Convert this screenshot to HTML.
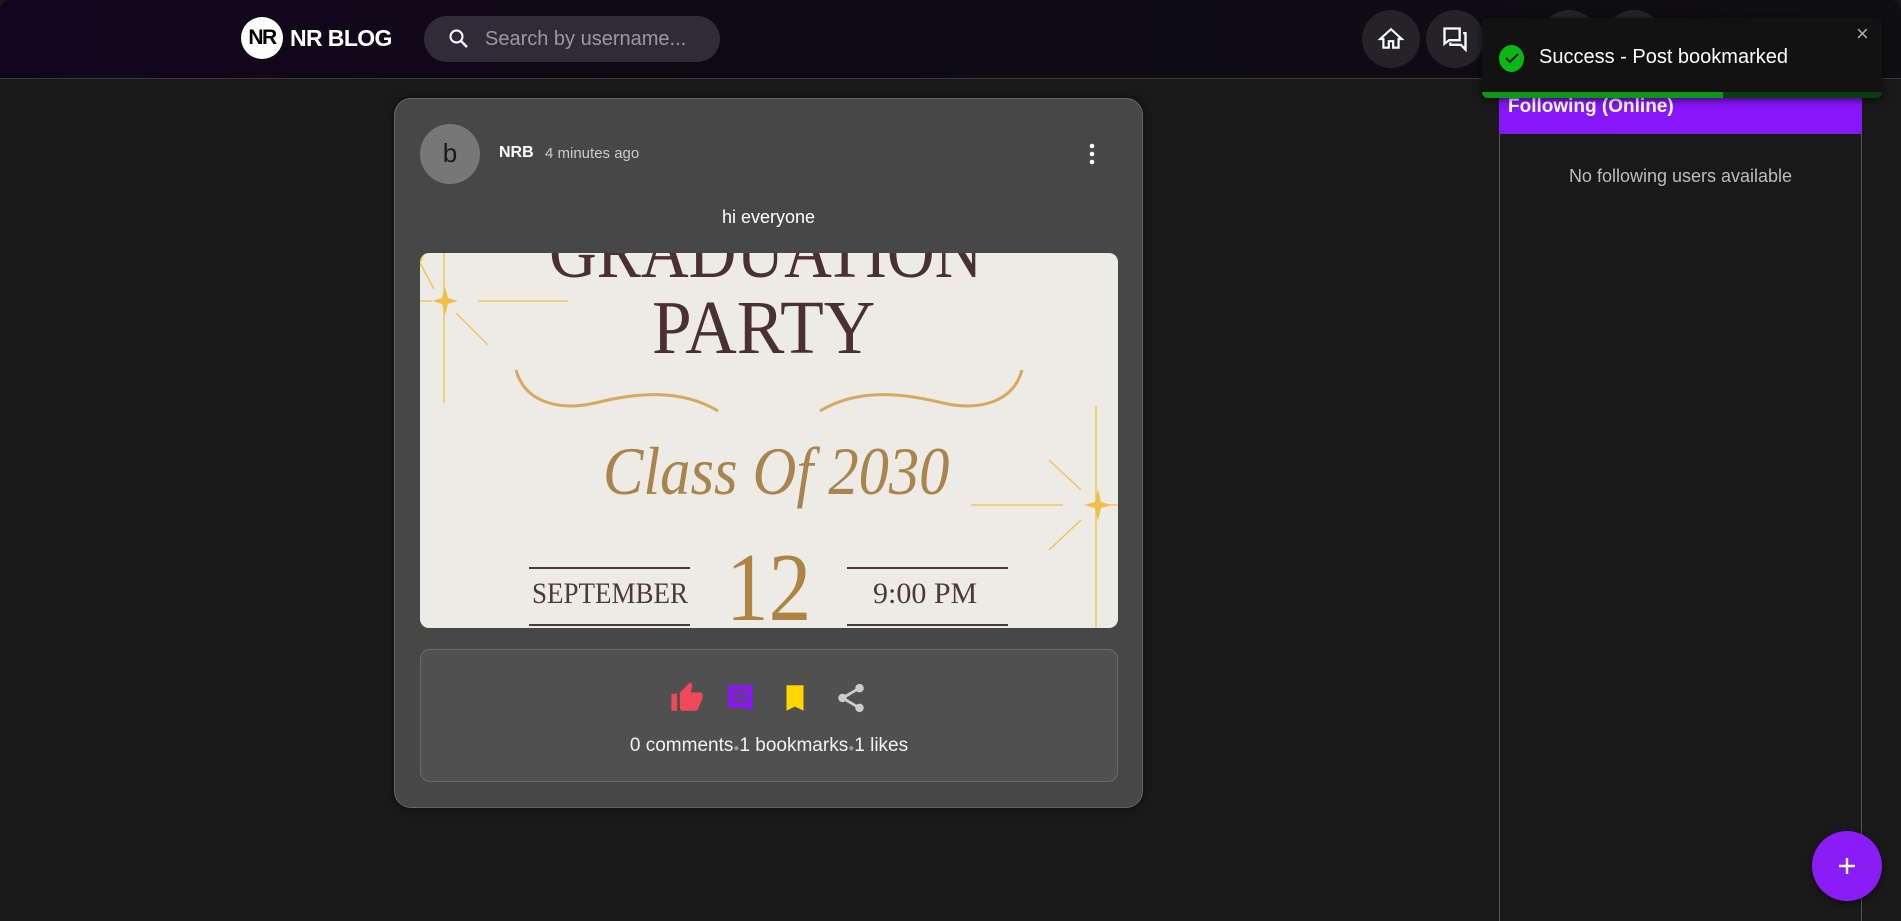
<!DOCTYPE html>
<html><head><meta charset="utf-8"><style>
*{box-sizing:border-box;margin:0;padding:0}
body{width:1901px;height:921px;overflow:hidden;background:#191919;font-family:"Liberation Sans",sans-serif;position:relative;color:#fff}
.hdr{position:absolute;left:0;top:0;width:1901px;height:79px;background:linear-gradient(90deg,#14051f,#0d0a13 40%,#0f0e12);border-bottom:1px solid #3a3a3a;border-radius:10px 10px 0 0}
.abs{position:absolute}
.circ{border-radius:50%}
.ib{position:absolute;top:10px;width:58px;height:58px;border-radius:50%;background:#252328;display:flex;align-items:center;justify-content:center}
.card{left:394px;top:98px;width:749px;height:710px;background:#474747;border:1px solid #666;border-radius:17px;box-shadow:0 0 8px rgba(0,0,0,.5)}
.img{left:420px;top:253px;width:698px;height:375px;background:#ecebe6;border-radius:9px;overflow:hidden}
.serif{font-family:"Liberation Serif",serif;position:absolute;white-space:nowrap;line-height:1}
.ln{position:absolute;height:2px;background:#4a3a3a}
</style></head><body>
<div class="hdr"></div>
<div class="abs circ" style="left:241px;top:17px;width:42px;height:42px;background:#fff;color:#000;font-weight:bold;font-size:21px;line-height:42px;text-align:center;letter-spacing:-1.5px">NR</div>
<div class="abs" style="left:290px;top:25px;font-weight:bold;font-size:23px;letter-spacing:-0.6px">NR BLOG</div>
<div class="abs" style="left:424px;top:16px;width:296px;height:46px;border-radius:23px;background:#302b39"></div>
<svg class="abs" style="left:447px;top:27px" width="24" height="24" viewBox="0 0 24 24"><circle cx="9.5" cy="9.5" r="6" fill="none" stroke="#fff" stroke-width="2"/><path d="M14 14l6 6" stroke="#fff" stroke-width="2.4"/></svg>
<div class="abs" style="left:485px;top:28px;font-size:20px;color:#9b97a2">Search by username...</div>
<div class="ib" style="left:1362px"><svg width="26" height="26" viewBox="0 0 24 24"><path d="M12 3L2 12h3v8h5v-6h4v6h5v-8h3z" fill="none" stroke="#fff" stroke-width="2"/></svg></div>
<div class="ib" style="left:1426px"><svg width="28" height="28" viewBox="0 0 24 24"><path d="M3 3h13v10H7l-4 3z" fill="none" stroke="#fff" stroke-width="2"/><path d="M19 7h2v14l-4-4H8v-2" fill="none" stroke="#fff" stroke-width="2"/></svg></div>
<div class="ib" style="left:1540px"></div><div class="ib" style="left:1605px"></div>

<div class="abs" style="left:1499px;top:79px;width:363px;height:842px;background:#191919;border-left:1px solid #555;border-right:1px solid #555"></div>
<div class="abs" style="left:1499px;top:88px;width:363px;height:46px;background:#8716f8"></div>
<div class="abs" style="left:1508px;top:96px;font-weight:bold;font-size:19px">Following (Online)</div>
<div class="abs" style="left:1499px;top:166px;width:363px;text-align:center;font-size:18px;color:#bdbdbd">No following users available</div>

<div class="abs" style="left:1482px;top:18px;width:400px;height:80px;background:#121212;border-radius:6px;overflow:hidden;box-shadow:0 2px 8px rgba(0,0,0,.6)">
<div class="abs" style="left:0;bottom:0;width:400px;height:6px;background:#0b3d10"></div>
<div class="abs" style="left:0;bottom:0;width:241px;height:6px;background:#0a9816"></div>
</div>
<div class="abs circ" style="left:1499px;top:45px;width:25px;height:27px;background:#0ab814"></div>
<svg class="abs" style="left:1503px;top:49px" width="18" height="18" viewBox="0 0 18 18"><path d="M3 9l4 4 8-8" fill="none" stroke="#111" stroke-width="2"/></svg>
<div class="abs" style="left:1539px;top:46px;font-size:20px;color:#fff">Success - Post bookmarked</div>
<div class="abs" style="left:1856px;top:21px;font-size:22px;color:#aaa">×</div>

<div class="abs card"></div>
<div class="abs circ" style="left:420px;top:124px;width:60px;height:60px;background:#777;color:#1a1a1a;font-size:26px;line-height:58px;text-align:center">b</div>
<div class="abs" style="left:499px;top:144px;font-weight:bold;font-size:16px">NRB</div>
<div class="abs" style="left:545px;top:145px;font-size:15px;color:#ccc">4 minutes ago</div>
<svg class="abs" style="left:1082px;top:142px" width="20" height="24" viewBox="0 0 20 24"><circle cx="10" cy="4" r="2.3" fill="#fff"/><circle cx="10" cy="12" r="2.3" fill="#fff"/><circle cx="10" cy="20" r="2.3" fill="#fff"/></svg>
<div class="abs" style="left:394px;top:207px;width:749px;text-align:center;font-size:18px">hi everyone</div>

<div class="abs img">
<svg class="abs" style="left:0;top:0" width="698" height="375">
<g stroke="#f0c45a" stroke-width="1.5" fill="none"><path d="M24 0v150M58 48h90M0 48h12M0 10l14 26M36 60l32 32M676 153v222M551 252h92M690 252h10M629 207l32 30M629 297l32-30M4 0l-4 10"/></g>
<path d="M25 34l3 11 10 3-10 3-3 11-3-11-10-3 10-3z" fill="#f0bf4a"/>
<path d="M678 236l3 13 11 3-11 3-3 13-3-13-11-3 11-3z" fill="#f0bf4a"/>
<path d="M96 117 C105 150 140 158 175 150 C215 140 260 135 298 158" fill="none" stroke="#d8a85e" stroke-width="3"/>
<path d="M602 117 C593 150 558 158 523 150 C483 140 438 135 400 158" fill="none" stroke="#d8a85e" stroke-width="3"/>
</svg>
<div class="serif" style="left:129px;top:-39px;font-size:76px;color:#4a3030;transform:scaleX(.87);transform-origin:left top">GRADUATION</div>
<div class="serif" style="left:232px;top:37px;font-size:76px;color:#4a3030;transform:scaleX(.94);transform-origin:left top">PARTY</div>
<div class="serif" style="left:183px;top:184px;font-size:68px;font-style:italic;color:#a9844c;transform:scaleX(.89);transform-origin:left top">Class Of 2030</div>
<div class="ln" style="left:109px;top:314px;width:161px"></div><div class="ln" style="left:109px;top:371px;width:161px"></div>
<div class="ln" style="left:427px;top:314px;width:161px"></div><div class="ln" style="left:427px;top:371px;width:161px"></div>
<div class="serif" style="left:112px;top:326px;font-size:30px;color:#4a3a3a;transform:scaleX(.9);transform-origin:left top">SEPTEMBER</div>
<div class="serif" style="left:453px;top:326px;font-size:30px;color:#4a3a3a">9:00 PM</div>
<div class="serif" style="left:306px;top:286px;font-size:97px;color:#ad8444;transform:scaleX(.88);transform-origin:left top">12</div>
</div>

<div class="abs" style="left:420px;top:649px;width:698px;height:133px;background:#505050;border:1px solid #6a6a6a;border-radius:10px"></div>
<svg class="abs" style="left:670px;top:681px" width="34" height="34" viewBox="0 0 24 24"><path d="M1 21h4V9H1zm22-11c0-1.1-.9-2-2-2h-6.3l1-4.6v-.3c0-.4-.2-.8-.4-1.1L14.2 1 7.6 7.6C7.2 7.9 7 8.4 7 9v10c0 1.1.9 2 2 2h9c.8 0 1.5-.5 1.8-1.2l3-7.1c.1-.2.2-.5.2-.7z" fill="#ef4a5a"/></svg>
<svg class="abs" style="left:724px;top:681px" width="34" height="34" viewBox="0 0 24 24"><path d="M3 3h17v16h-1v3l-3-3H3z" fill="#8a16f5"/><path d="M6.5 7.5h10M6.5 11h10M6.5 14.5h10" stroke="#505050" stroke-width="1.6"/></svg>
<svg class="abs" style="left:778px;top:681px" width="34" height="34" viewBox="0 0 24 24"><path d="M6 3h12v18l-6-3-6 3z" fill="#ffd600"/></svg>
<svg class="abs" style="left:834px;top:681px" width="34" height="34" viewBox="0 0 24 24"><circle cx="18" cy="5" r="3" fill="#ccc"/><circle cx="6" cy="12" r="3" fill="#ccc"/><circle cx="18" cy="19" r="3" fill="#ccc"/><path d="M18 5L6 12l12 7" stroke="#ccc" stroke-width="2" fill="none"/></svg>
<div class="abs" style="left:420px;top:735px;width:698px;text-align:center;font-size:19px;color:#f2f2f2">0 comments<span style="color:#999;font-size:10px">●</span>1 bookmarks<span style="color:#999;font-size:10px">●</span>1 likes</div>

<div class="abs circ" style="left:1812px;top:831px;width:70px;height:70px;background:#8a1cf5;box-shadow:0 2px 6px rgba(0,0,0,.5)"></div>
<svg class="abs" style="left:1835px;top:854px" width="24" height="24" viewBox="0 0 24 24"><path d="M12 4v16M4 12h16" stroke="#fff" stroke-width="2.4"/></svg>
</body></html>
